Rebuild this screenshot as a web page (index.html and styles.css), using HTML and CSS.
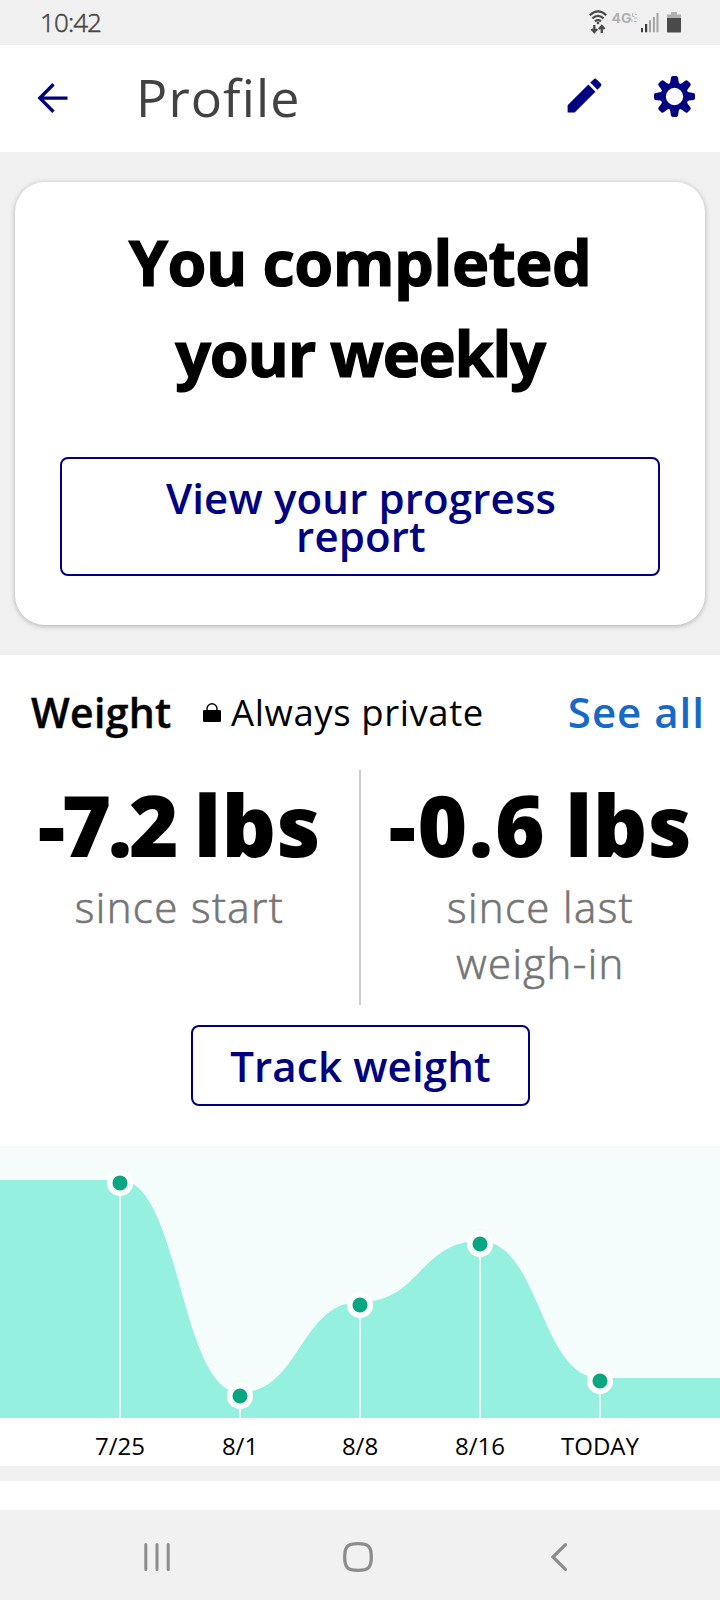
FILE: index.html
```html
<!DOCTYPE html>
<html lang="en">
<head>
<meta charset="utf-8">
<title>Profile</title>
<link rel="stylesheet" href="styles.css">
</head>
<body>
<div class="screen">
  <div class="status">
    <span class="clock">10:42</span>
    <svg class="status-icons" width="96" height="24" viewBox="588 10 96 24">
      <g fill="none" stroke="#4a4a4a" stroke-width="2.2">
        <path d="M589.8 15.2Q598 7.600 606.200 15.200"/>
        <path d="M592.400 18.400Q598 13.400 603.600 18.400"/>
        <path d="M595 21.300Q598 18.900 601 21.300" />
      </g>
      <circle cx="598" cy="23" r="1.300" fill="#4a4a4a"/>
      <path d="M594.300 25v7M591.500 29l2.800 3 2.800-3M601.800 33v-7M599 29l2.800-3 2.800 3" fill="none" stroke="#4a4a4a" stroke-width="2.300"/>
      <text class="net" x="611.500" y="22.700" textLength="20" lengthAdjust="spacingAndGlyphs">4G</text>
      <path d="M632.500 13v3.500h2M634 18h3M635.500 13h-0.500M634 21.500h2.500M632 19v3M635 14.500h2" stroke="#b8b8b8" stroke-width="1" fill="none"/>
      <path d="M641 28h2v4.300h-2zM645 24h2.200v8.300H645z" fill="#3c3c3c"/>
      <path d="M649 20.300h2v12h-2zM652.900 17h2v15.300h-2zM656.500 13h2v19.300h-2z" fill="#a3a3a3"/>
      <path d="M671 12h6v2.500h4V18h-14v-3.500h4z" fill="#b0b0b0"/>
      <path d="M667 18h14v13.500q0 1-1 1h-12q-1 0-1-1z" fill="#4a4a4a"/>
    </svg>
  </div>
  <header class="bar">
    <svg class="back" width="32" height="32" viewBox="37 81.500 32 32"><path d="M67.500 97.600H40M53.500 83.800L39.900 97.600l13.600 13.700" fill="none" stroke="#000080" stroke-width="3.400"/></svg>
    <h1 class="title">Profile</h1>
    <svg class="edit" width="45" height="45" viewBox="0 0 24 24" fill="#000080"><path d="M3 17.250V21h3.750L17.810 9.940l-3.750-3.750L3 17.250zM20.710 7.040a1 1 0 0 0 0-1.410l-2.340-2.340a1 1 0 0 0-1.410 0l-1.830 1.830 3.750 3.750 1.830-1.830z"/></svg>
    <svg class="gear" width="42" height="42" viewBox="-21.500 -20.500 42 42">
      <defs><path id="tooth" d="M-5.200-11.500Q-4-14-3.600-18.800Q-3.300-20.500-1.800-20.500h3.600Q3.300-20.500 3.600-18.800Q4-14 5.200-11.500z"/></defs>
      <g fill="#000080">
        <use href="#tooth"/><use href="#tooth" transform="rotate(45)"/><use href="#tooth" transform="rotate(90)"/><use href="#tooth" transform="rotate(135)"/>
        <use href="#tooth" transform="rotate(180)"/><use href="#tooth" transform="rotate(225)"/><use href="#tooth" transform="rotate(270)"/><use href="#tooth" transform="rotate(315)"/>
      </g>
      <circle r="11.300" fill="none" stroke="#000080" stroke-width="5.300"/>
    </svg>
  </header>
  <main>
    <section class="report">
      <div class="card">
        <h2 class="headline">You completed<br><span class="second">your weekly</span></h2>
        <button class="outline wide">View your progress<br>report</button>
      </div>
    </section>
    <section class="weight">
      <div class="row">
        <h3 class="name">Weight</h3>
        <svg class="lock" width="18" height="20" viewBox="203 702 18 20"><path d="M207 711v-2.200a5 5 0 0 1 10 0V711" fill="none" stroke="#000" stroke-width="1.400"/><rect x="203" y="710" width="18" height="12" rx="1.300"/></svg>
        <span class="private">Always private</span>
        <a class="all">See all</a>
      </div>
      <div class="stats">
        <div class="stat"><div class="value"><span class="num">-7.2</span> lbs</div><div class="label">since start</div></div>
        <div class="stat"><div class="value"><span class="num loose">-0.6</span> lbs</div><div class="label">since last<br>weigh-in</div></div>
      </div>
      <button class="outline track">Track weight</button>
      <svg class="chart" width="720" height="272" viewBox="0 1146 720 272">
        <rect y="1146" width="720" height="272" fill="#f4fdfc"/>
        <path fill="#96f0df" d="M0 1180H120C180 1180 180 1392.500 240 1392.500C300 1392.500 300 1302 360 1302C420 1302 420 1241 480 1241C540 1241 540 1378 600 1378H720V1418H0z"/>
        <path d="M120 1183V1418M240 1396V1418M360 1305V1418M480 1244V1418M600 1381V1418" stroke="#e9fcf8" stroke-width="2"/>
        <g fill="#0aa581" stroke="#fff" stroke-width="5.500"><circle cx="120" cy="1183" r="10.300"/><circle cx="240" cy="1396" r="10.300"/><circle cx="360" cy="1305" r="10.300"/><circle cx="480" cy="1244" r="10.300"/><circle cx="600" cy="1381" r="10.300"/></g>
      </svg>
      <div class="dates"><span>7/25</span><span>8/1</span><span>8/8</span><span>8/16</span><span>TODAY</span></div>
    </section>
    <div class="next"></div>
  </main>
  <nav class="nav">
    <svg width="28" height="30" viewBox="0 0 28 30"><path d="M2.800 2.500v25M14 2.500v25M25.200 2.500v25" stroke="#8c8c8c" stroke-width="3" stroke-linecap="round"/></svg>
    <svg class="home" width="30" height="30" viewBox="0 0 30 30"><path d="M15 1.700C25.500 1.700 28.300 4.500 28.300 15S25.500 28.300 15 28.300 1.700 25.500 1.700 15 4.500 1.700 15 1.700z" fill="none" stroke="#8c8c8c" stroke-width="3.300"/></svg>
    <svg width="18" height="30" viewBox="0 0 18 30"><path d="M15.500 2.700L3 15l12.500 12.300" fill="none" stroke="#8c8c8c" stroke-width="3.200" stroke-linecap="round"/></svg>
  </nav>
</div>
</body>
</html>
```

FILE: styles.css
```css
* { box-sizing: border-box; }
body { margin: 0; background: #f0f0f0; font-family: "Open Sans", "Noto Sans", sans-serif; color: #000; }
h1, h2, h3 { margin: 0; }
svg { display: block; flex: none; }
.screen { width: 720px; height: 1600px; overflow: hidden; display: flex; flex-direction: column; }
.status { height: 45px; padding: 0 36px 0 40px; display: flex; justify-content: space-between; }
.clock { font: 300 26px/45px "Open Sans", sans-serif; letter-spacing: -.9px; color: #444; -webkit-text-stroke: .5px #444; }
.status-icons { margin-top: 10px; }
.net { font: 700 13px "Inter", sans-serif; fill: #b0b0b0; }
.bar { height: 107px; background: #fff; display: flex; padding-left: 37px; }
.back { margin-top: 37px; }
.title { flex: none; width: 425px; margin-right: 68px; padding-left: 67px; font-size: 52px; line-height: 104px; font-weight: 400; letter-spacing: 1.1px; color: #424242; }
.edit { margin: 28px 46px 0 0; }
.gear { margin-top: 31px; }
.report { height: 503px; padding: 30px 15px 0; }
.card { height: 442.500px; background: #fff; border-radius: 30px; padding: 34px 45px 0; text-align: center; box-shadow: 0 1px 5px rgba(0,0,0,.28); }
.headline { font-size: 63px; line-height: 91px; font-weight: 700; letter-spacing: -.6px; -webkit-text-stroke: 1.2px #000; }
.second { letter-spacing: -1.300px; }
.outline { display: block; background: #fff; border: 2px solid #000080; border-radius: 8px; color: #000080; font: 600 42px/38px "Open Sans", sans-serif; letter-spacing: .15px; padding: 0; }
.wide { width: 600px; height: 119px; margin-top: 59px; padding-left: 2px; }
.weight { height: 811px; background: #fff; padding-top: 29px; }
.row { display: flex; height: 56px; line-height: 56px; padding: 0 15px 0 31px; }
.name { width: 172px; font-size: 41px; font-weight: 600; letter-spacing: .3px; white-space: nowrap; -webkit-text-stroke: .4px #000; }
.lock { margin-top: 18px; }
.private { font-size: 36.500px; letter-spacing: .6px; padding-left: 10px; flex: 1; white-space: nowrap; }
.all { font-size: 42px; font-weight: 600; letter-spacing: 1px; color: #1769c5; white-space: nowrap; }
.stats { height: 235px; margin-top: 30px; display: grid; grid-template-columns: 361px 359px; }
.stat { text-align: center; padding-top: 4px; }
.stat:first-child { border-right: 2px solid #ccc; }
.value { font-size: 85px; line-height: 100px; font-weight: 800; white-space: nowrap; letter-spacing: .4px; word-spacing: -4px; }
.num { letter-spacing: -3.5px; }
.loose { letter-spacing: 1.6px; }
.label { margin-top: 5px; font-size: 42px; line-height: 56px; font-weight: 300; letter-spacing: 1.4px; color: #757575; -webkit-text-stroke: .7px #757575; }
.track { width: 339px; height: 81px; margin: 20px 190px 40px 191px; }
.dates { height: 48px; display: grid; grid-template-columns: repeat(5, 120px); justify-content: center; text-align: center; font: 400 24px/56px "Open Sans", sans-serif; }
.next { height: 44px; border-top: 15px solid #f0f0f0; background: #fff; }
.nav { height: 90px; background: #f1f1f1; display: grid; grid-template-columns: 200px 207px 18px; align-items: center; padding: 4px 0 0 143px; }
```
